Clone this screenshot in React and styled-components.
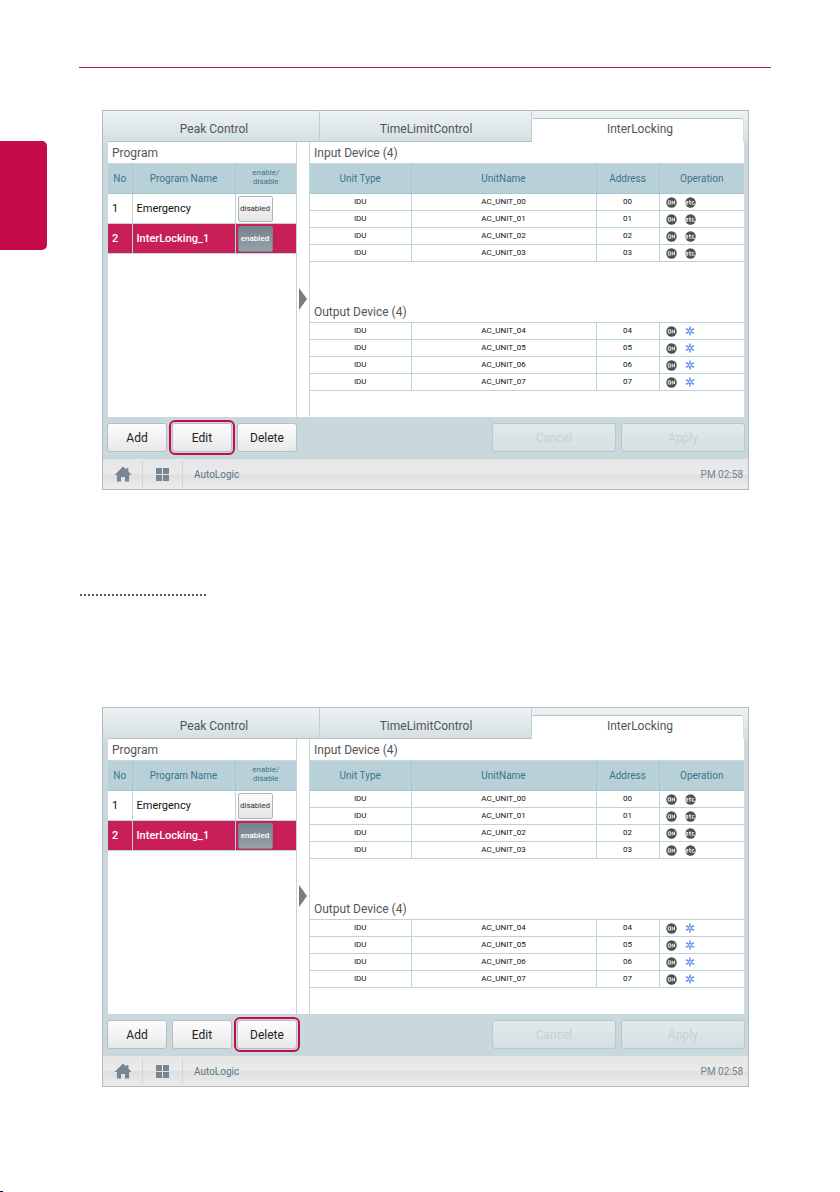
import { createGlobalStyle, styled } from 'styled-components';

const inputDevices = ['00', '01', '02', '03'];
const outputDevices = ['04', '05', '06', '07'];

const programs = [
  { no: 1, name: 'Emergency', state: 'disabled' },
  { no: 2, name: 'InterLocking_1', state: 'enabled' },
];

const OnIcon = () => (
  <svg width="11" height="11" viewBox="0 0 11 11" role="img" aria-label="On">
    <circle cx="5.5" cy="5.5" r="5.2" fill="#505050" />
    <path
      d="M2.3 3.9h2.3v3.2h-2.3z M6.2 7.5v-3.6l2.3 3.2v-3.6"
      fill="none"
      stroke="#f4f4f4"
      strokeWidth="0.9"
    />
  </svg>
);

const EtcIcon = () => (
  <svg width="11" height="11" viewBox="0 0 11 11" role="img" aria-label="Etc">
    <circle cx="5.5" cy="5.5" r="5.2" fill="#505050" />
    <path
      d="M3.2 7.2H1V4.6h2v1.3H1.2 M4.9 3.2V7.2h1.3 M4.1 4.6h2 M9 4.6H7.2V7.2H10"
      fill="none"
      stroke="#f4f4f4"
      strokeWidth="0.9"
    />
  </svg>
);

const CoolIcon = () => (
  <svg width="10" height="10" viewBox="0 0 10 10" role="img" aria-label="Cooling">
    <path
      d="M5 0.6v8.8M1 2.7l8 4.6M9 2.7l-8 4.6"
      fill="none"
      stroke="#5a8df0"
      strokeWidth="1.5"
    />
    <circle cx="5" cy="5" r="0.9" fill="#fff" />
  </svg>
);

const HomeIcon = () => (
  <svg width="18" height="16" viewBox="0 0 18 16" aria-hidden="true">
    <path
      d="M9 0.5l3.4 3.2V2h2v3.6L17.5 9h-2.4v6.5h-4.1v-4.4H7v4.4H2.9V9H0.5z"
      fill="#778692"
    />
  </svg>
);

const GridIcon = () => (
  <svg width="13" height="13" viewBox="0 0 13 13" aria-hidden="true">
    <path d="M0 0h6v6H0zM7 0h6v6H7zM0 7h6v6H0zM7 7h6v6H7z" fill="#778692" />
  </svg>
);

const DeviceColumns = () => (
  <colgroup>
    <col width="101" />
    <col />
    <col width="63" />
    <col width="85" />
  </colgroup>
);

const DeviceRows = ({ devices, icon }) => (
  <tbody>
    {devices.map(id => (
      <tr key={id}>
        <td>IDU</td>
        <td>AC_UNIT_{id}</td>
        <td>{id}</td>
        <td>
          <Operations>
            <OnIcon />
            {icon}
          </Operations>
        </td>
      </tr>
    ))}
  </tbody>
);

const ControlScreen = ({ highlight }) => (
  <Screen>
    <Tabs>
      <Tab>Peak Control</Tab>
      <Tab>TimeLimitControl</Tab>
      <Tab $active>InterLocking</Tab>
    </Tabs>
    <Panels>
      <ProgramPanel>
        <PanelTitle>Program</PanelTitle>
        <ProgramTable>
          <colgroup>
            <col width="24" />
            <col />
            <col width="61" />
          </colgroup>
          <thead>
            <tr>
              <th>No</th>
              <th>Program Name</th>
              <SmallTh>
                enable/
                <br />
                disable
              </SmallTh>
            </tr>
          </thead>
          <tbody>
            {programs.map(({ no, name, state }) => (
              <ProgramRow key={no} $selected={state === 'enabled'}>
                <td>{no}</td>
                <td>{name}</td>
                <td>
                  <StateButton $on={state === 'enabled'}>{state}</StateButton>
                </td>
              </ProgramRow>
            ))}
          </tbody>
        </ProgramTable>
      </ProgramPanel>
      <Divider>
        <svg width="8" height="22" viewBox="0 0 8 22" aria-hidden="true">
          <path d="M0 0l8 11l-8 11z" fill="#7b7b7b" />
        </svg>
      </Divider>
      <DevicePanel>
        <PanelTitle>Input Device (4)</PanelTitle>
        <DeviceTable>
          <DeviceColumns />
          <thead>
            <tr>
              <th>Unit Type</th>
              <th>UnitName</th>
              <th>Address</th>
              <th>Operation</th>
            </tr>
          </thead>
          <DeviceRows devices={inputDevices} icon={<EtcIcon />} />
        </DeviceTable>
        <OutputTitle>Output Device (4)</OutputTitle>
        <DeviceTable>
          <DeviceColumns />
          <DeviceRows devices={outputDevices} icon={<CoolIcon />} />
        </DeviceTable>
      </DevicePanel>
    </Panels>
    <Actions>
      <ActionGroup>
        {['Add', 'Edit', 'Delete'].map(label => (
          <ActionButton key={label} $marked={label === highlight}>
            {label}
          </ActionButton>
        ))}
      </ActionGroup>
      <ActionGroup>
        <WideButton disabled>Cancel</WideButton>
        <WideButton disabled>Apply</WideButton>
      </ActionGroup>
    </Actions>
    <StatusBar>
      <BarButton aria-label="Home">
        <HomeIcon />
      </BarButton>
      <BarButton aria-label="Menu">
        <GridIcon />
      </BarButton>
      <Location>AutoLogic</Location>
      <Clock>PM 02:58</Clock>
    </StatusBar>
  </Screen>
);

const App = () => (
  <>
    <GlobalStyle />
    <Page>
      <Rail>
        <SideTab />
        <CornerMark />
      </Rail>
      <Content>
        <Rule />
        <ControlScreen highlight="Edit" />
        <Dots />
        <ControlScreen highlight="Delete" />
      </Content>
    </Page>
  </>
);

export default App;

const GlobalStyle = createGlobalStyle`
  * {
    box-sizing: border-box;
  }
  body {
    margin: 0;
    background: #fff;
    font-family: Roboto, 'Liberation Sans', sans-serif;
  }
  button {
    font-family: inherit;
    padding: 0;
    cursor: pointer;
  }
`;

const Page = styled.main`
  display: grid;
  grid-template-columns: 79px minmax(0, 1fr);
  min-height: 100vh;
  padding-right: 69px;
`;

const Rail = styled.aside`
  display: flex;
  flex-direction: column;
  justify-content: space-between;
  padding-top: 141px;
`;

const SideTab = styled.div`
  width: 47px;
  height: 109px;
  background: #c60b4b;
  border-radius: 0 5px 5px 0;
`;

const CornerMark = styled.div`
  width: 3px;
  height: 1px;
  background: #000060;
`;

const Content = styled.div`
  padding-top: 67px;
`;

const Rule = styled.hr`
  height: 1px;
  margin: 0 0 42px;
  border: none;
  background: #bd174e;
`;

const Dots = styled.div`
  width: 129px;
  height: 2px;
  margin: 104px 0 111px;
  background: radial-gradient(circle, #555 1px, transparent 1px) 0 0 / 4px 2px;
`;

const Screen = styled.section`
  margin: 0 22px 0 23px;
  border: 1px solid #b4b8ba;
  background: linear-gradient(#eef3f4, #c9d8dc 40px);
`;

const Tabs = styled.nav`
  display: grid;
  grid-template-columns: repeat(3, 1fr);
  height: 31px;
  padding: 0 4px 0 5px;
  background: linear-gradient(#edf3f4, #d3dfe2);
`;

const Tab = styled.button`
  height: ${({ $active }) => ($active ? '24px' : '31px')};
  align-self: end;
  padding: ${({ $active }) => ($active ? '0 0 2px 4px' : '4px 0 0')};
  border: 1px solid transparent;
  border-right-color: ${({ $active }) => ($active ? '#d8dee0' : '#c3cdd0')};
  border-bottom-color: ${({ $active }) => ($active ? '#fff' : '#b9bfc1')};
  border-top-color: ${({ $active }) => ($active ? '#b9bfc1' : 'transparent')};
  border-radius: ${({ $active }) => ($active ? '3px 3px 0 0' : '0')};
  background: ${({ $active }) => ($active ? '#fff' : 'none')};
  color: #555;
  font-size: 12px;
`;

const Panels = styled.div`
  display: grid;
  grid-template-columns: 189px 12px minmax(0, 1fr);
  height: 275px;
  margin: 0 4px 0 5px;
  background: #fff;
`;

const ProgramPanel = styled.div`
  border-right: 1px solid #c5d9dd;
`;

const DevicePanel = styled.div`
  border-left: 1px solid #c5d9dd;
`;

const Divider = styled.div`
  display: flex;
  justify-content: center;
  align-items: center;
  padding-top: 38px;
`;

const PanelTitle = styled.h2`
  height: 21px;
  margin: 0;
  padding-left: 4px;
  color: #555;
  font-size: 12px;
  font-weight: 400;
  line-height: 23px;
`;

const OutputTitle = styled(PanelTitle)`
  margin-top: 39px;
`;

const Table = styled.table`
  width: 100%;
  border-collapse: collapse;
  table-layout: fixed;
  th {
    height: 30px;
    padding: 0;
    border: 1px solid #a9c5cd;
    border-top-color: #c9d8dc;
    background: #b8d1d8;
    color: #3b7488;
    font-size: 10px;
    font-weight: 400;
  }
  th:first-child,
  td:first-child {
    border-left: none;
  }
  th:last-child,
  td:last-child {
    border-right: none;
  }
  td {
    padding: 0;
    border: 1px solid #bcd3d9;
    color: #111;
  }
`;

const ProgramTable = styled(Table)`
  td {
    height: 30px;
    padding-left: 4px;
    font-size: 11px;
  }
  td:last-child {
    padding-left: 2px;
  }
`;

const SmallTh = styled.th`
  && {
    padding-bottom: 4px;
    font-size: 8px;
    line-height: 9px;
  }
`;

const ProgramRow = styled.tr`
  background: ${({ $selected }) => ($selected ? '#c91f58' : '#fff')};
  td {
    color: ${({ $selected }) => ($selected ? '#fff' : '#111')};
    font-weight: ${({ $selected }) => ($selected ? '500' : '400')};
  }
`;

const StateButton = styled.button`
  display: block;
  width: 35px;
  height: 26px;
  border: 1px solid ${({ $on }) => ($on ? '#78858c' : '#b5b5b5')};
  border-radius: 2px;
  background: ${({ $on }) =>
    $on
      ? 'linear-gradient(#75838c, #96a2aa)'
      : 'linear-gradient(#fcfcfc, #e4e4e4)'};
  color: ${({ $on }) => ($on ? '#fff' : '#333')};
  font-size: 8px;
  font-weight: ${({ $on }) => ($on ? '500' : '400')};
`;

const DeviceTable = styled(Table)`
  td {
    height: 17px;
    font-size: 8px;
    line-height: 10px;
    text-align: center;
  }
`;

const Operations = styled.div`
  display: flex;
  align-items: center;
  gap: 8px;
  padding-left: 6px;
`;

const Actions = styled.div`
  display: flex;
  justify-content: space-between;
  padding: 6px 3px 7px 4px;
`;

const ActionGroup = styled.div`
  display: flex;
  gap: 5px;
`;

const ActionButton = styled.button`
  width: 60px;
  height: 29px;
  border: 1px solid #b7bfc2;
  border-radius: 3px;
  outline: ${({ $marked }) => ($marked ? '2px solid #c60b4b' : 'none')};
  outline-offset: 1px;
  background: linear-gradient(#fdfdfd, #e8e8e8);
  color: #222;
  font-size: 12px;
`;

const WideButton = styled(ActionButton)`
  width: 124px;
  border-color: #b9c7ca;
  background: linear-gradient(#e2e9ea, #d5dfe1);
  color: #c8cfd1;
  cursor: default;
`;

const StatusBar = styled.footer`
  display: flex;
  align-items: center;
  height: 30px;
  padding-right: 5px;
  background: linear-gradient(#e6e6e6, #eaeaea 50%, #dfdfdf 52%, #ececec);
`;

const BarButton = styled.button`
  display: flex;
  justify-content: center;
  align-items: center;
  width: 40px;
  height: 26px;
  border: none;
  border-right: 1px solid #d3d3d3;
  background: none;
`;

const Location = styled.span`
  flex: 1;
  padding-left: 11px;
  color: #567585;
  font-size: 10px;
`;

const Clock = styled.time`
  color: #6f8492;
  font-size: 10px;
`;
